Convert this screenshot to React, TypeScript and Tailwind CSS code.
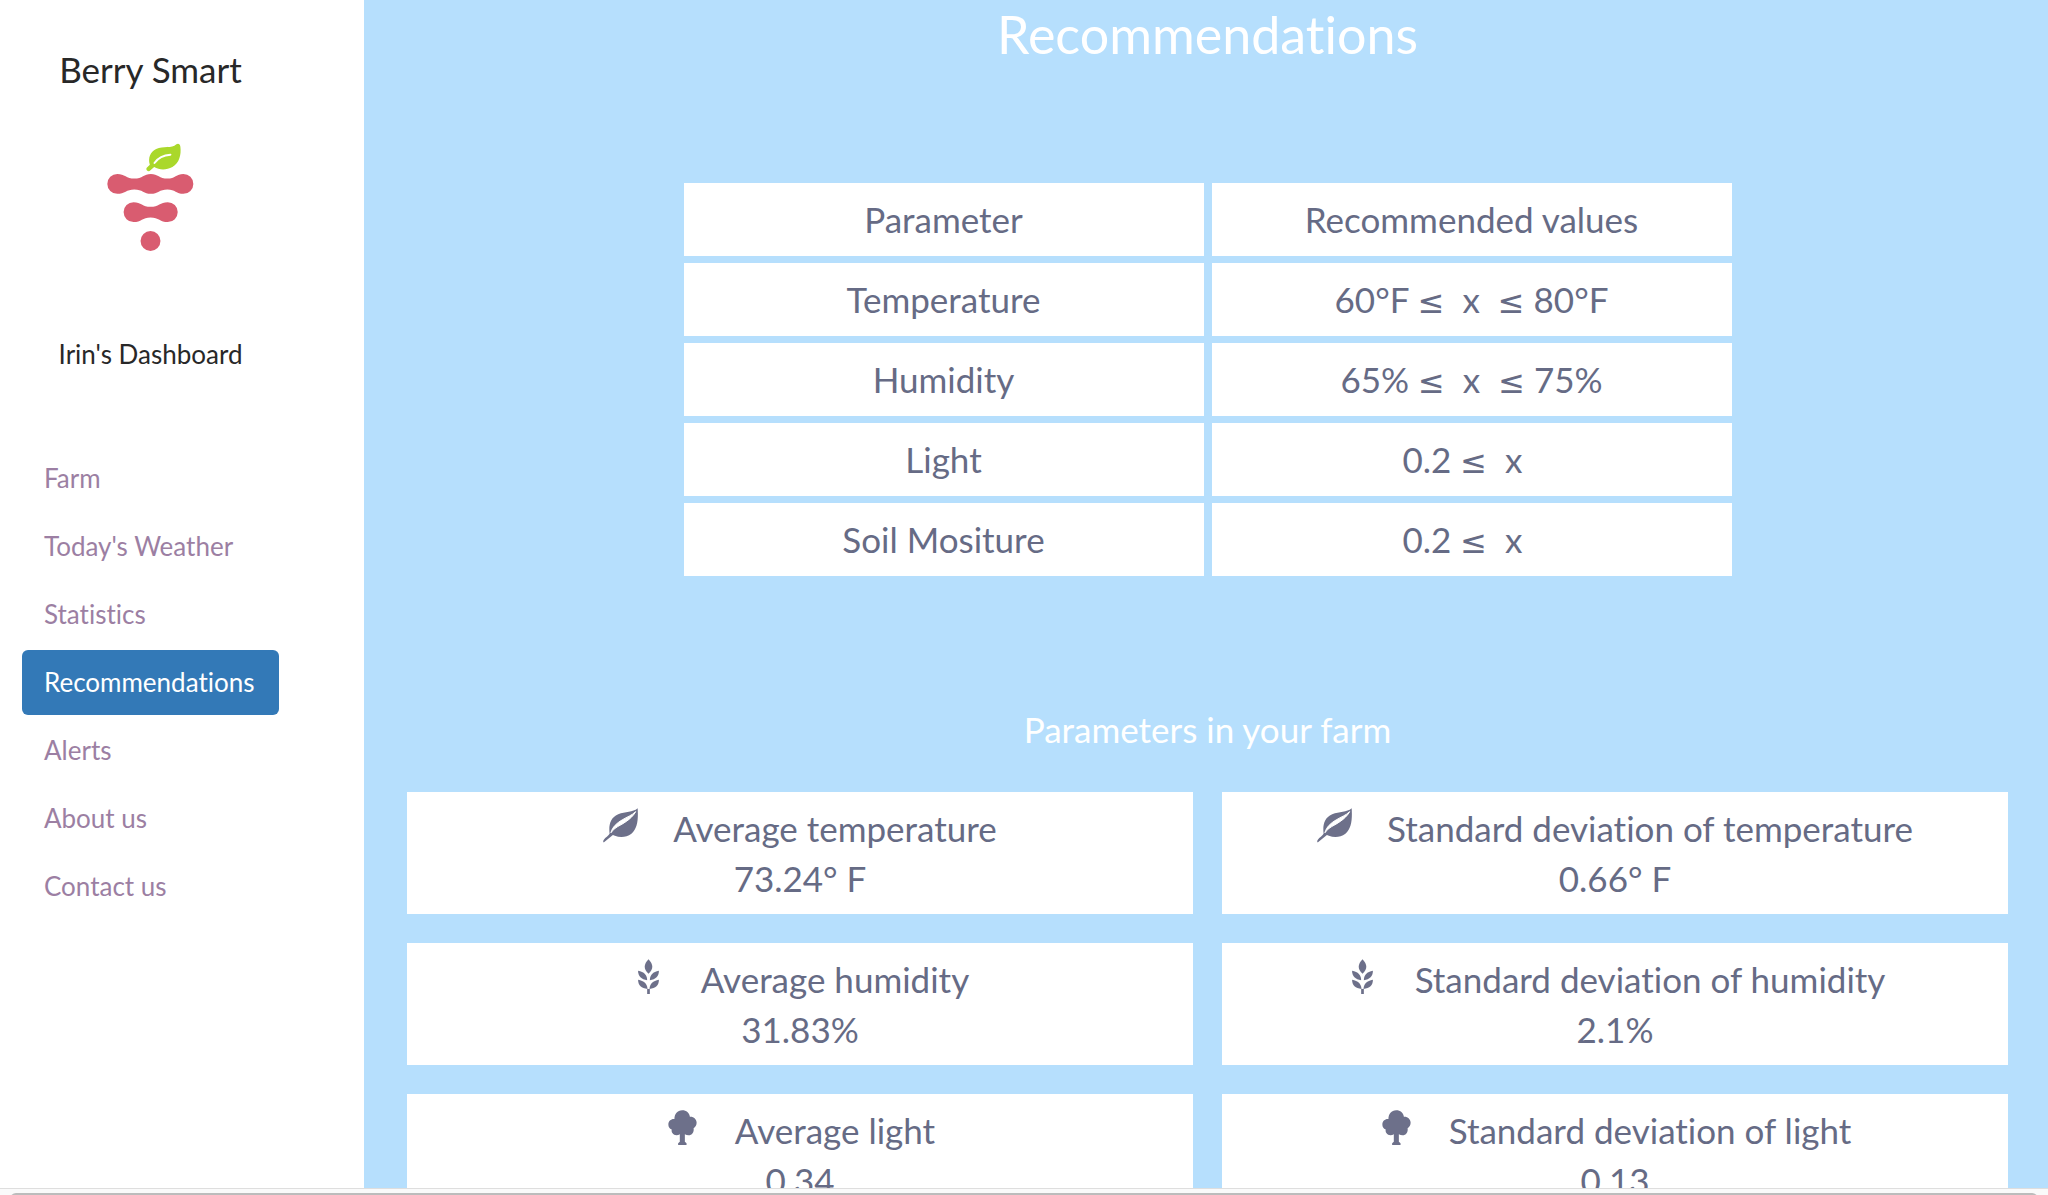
import type { ReactNode } from "react";

const navItems = [
  "Farm",
  "Today's Weather",
  "Statistics",
  "Recommendations",
  "Alerts",
  "About us",
  "Contact us",
];

function Lte() {
  return <span className="font-['DejaVu_Sans',sans-serif] text-[32px] leading-none">≤</span>;
}

const rows: { name: string; min: string; max?: string }[] = [
  { name: "Temperature", min: "60°F", max: "80°F" },
  { name: "Humidity", min: "65%", max: "75%" },
  { name: "Light", min: "0.2" },
  { name: "Soil Mositure", min: "0.2" },
];

function BerryLogo() {
  return (
    <svg viewBox="321 428 262 326" className="h-[109px] w-[87px]" role="img" aria-label="Berry Smart logo">
      <g fill="#d95c70">
        <path d="M352 520C374 520 380 534 403 534C428 534 432 520 453 520C474 520 479 534 503 534C526 534 530 520 551 520A30 30 0 0 1 551 580C530 580 526 567 503 567C479 567 474 580 453 580C432 580 428 567 403 567C380 567 374 580 352 580A30 30 0 0 1 352 520Z" />
        <path d="M401 605C424 605 428 619 452 619C477 619 481 605 504 605A30 30 0 0 1 504 665C481 665 477 651 452 651C428 651 424 665 401 665A30 30 0 0 1 401 605Z" />
        <circle cx="452" cy="722" r="30" />
      </g>
      <path
        d="M530 431C536 427 541 431 542 438C545 462 539 487 518 499C500 509 479 509 463 499L451 510C446 515 437 508 440 502L450 492C444 473 451 453 469 445C491 435 515 445 530 431Z"
        fill="#aad82b"
      />
      <path d="M464 487C475 471 489 463 512 462" fill="none" stroke="#fff" strokeWidth="6" strokeLinecap="round" />
    </svg>
  );
}

function LeafIcon() {
  return (
    <svg viewBox="38 55 106 104" className="size-[35px]" fill="currentColor" aria-hidden="true">
      <path d="M143 55C145 88 143 116 124 132C109 143 90 144 74 138L68 136L41 158C38 159 38 154 40 151C46 142 54 139 58 132C55 107 59 84 84 73C106 65 128 68 143 55Z" />
      <path d="M62 129C72 112 92 107 108 95C120 87 131 76 137 65C125 77 110 81 98 89C80 99 66 112 62 129Z" fill="#fff" stroke="#fff" strokeWidth="3" />
    </svg>
  );
}

function GrainIcon() {
  return (
    <svg viewBox="39 58 104 104" className="size-[35px]" fill="currentColor" aria-hidden="true">
      <path d="M91 59C106 75 106 88 91 102C76 88 76 75 91 59Z" />
      <path d="M60 93C78 96 87 106 87 121C70 119 60 109 60 93Z" />
      <path d="M122 93C104 96 95 106 95 121C112 119 122 109 122 93Z" />
      <path d="M60 120C78 123 87 132 88 147C70 146 60 136 60 120Z" />
      <path d="M122 120C104 123 95 132 94 147C112 146 122 136 122 120Z" />
      <path d="M87 147H95V162H87Z" />
    </svg>
  );
}

function TreeIcon() {
  return (
    <svg viewBox="47 47 104 104" className="size-[35px]" fill="currentColor" aria-hidden="true">
      <path d="M75 74C75 59 84 48 98 48C111 48 119 56 121 67C132 66 141 74 141 85C141 93 137 98 132 101C134 113 127 122 117 122C113 122 109 121 106 119V141L111 146V151H86V146L91 141V119C88 121 85 122 81 122C71 122 65 113 67 105C60 102 57 97 57 90C57 80 65 73 75 74Z" />
    </svg>
  );
}

const cards: { icon: () => ReactNode; label: string; value: string }[] = [
  { icon: LeafIcon, label: "Average temperature", value: "73.24° F" },
  { icon: LeafIcon, label: "Standard deviation of temperature", value: "0.66° F" },
  { icon: GrainIcon, label: "Average humidity", value: "31.83%" },
  { icon: GrainIcon, label: "Standard deviation of humidity", value: "2.1%" },
  { icon: TreeIcon, label: "Average light", value: "0.34" },
  { icon: TreeIcon, label: "Standard deviation of light", value: "0.13" },
];

export default function App() {
  return (
    <div className="flex h-screen flex-col overflow-hidden bg-white font-[Lato,sans-serif] [font-variant-ligatures:none]">
      <div className="flex min-h-0 flex-1 overflow-hidden">
        <aside className="w-[364px] shrink-0 pl-[22px] text-[#282828]">
          <div className="flex w-[257px] flex-col items-center">
            <h2 className="mt-11 text-[35px] leading-[50px]">Berry Smart</h2>
            <div className="mt-[49px]">
              <BerryLogo />
            </div>
            <h4 className="mt-[84px] text-[26px] leading-9">Irin's Dashboard</h4>
            <nav className="mt-[74px] flex w-full flex-col gap-[3px]">
              {navItems.map((item) => {
                const active = item === "Recommendations";
                return (
                  <a
                    key={item}
                    href="#"
                    aria-current={active ? "page" : undefined}
                    className={
                      active
                        ? "rounded-md bg-[#3379b7] px-[22px] py-3.5 text-[26px] leading-[37px] text-white"
                        : "px-[22px] py-3.5 text-[26px] leading-[37px] text-[#9c7fa3]"
                    }
                  >
                    {item}
                  </a>
                );
              })}
            </nav>
          </div>
        </aside>

        <main className="min-w-0 flex-1 overflow-hidden bg-[#b6dffd] pt-1 pr-10 pl-[43px] text-center text-[35px] leading-[50px] text-[#666b85]">
          <h1 className="text-[52px] leading-[60px] text-white">Recommendations</h1>

          <table className="mx-auto mt-28 w-full max-w-[1064px] table-fixed border-separate border-spacing-x-2 border-spacing-y-[7px]">
            <thead>
              <tr>
                <th scope="col" className="bg-white py-[11px] leading-[51px] font-normal">Parameter</th>
                <th scope="col" className="bg-white py-[11px] leading-[51px] font-normal">Recommended values</th>
              </tr>
            </thead>
            <tbody>
              {rows.map(({ name, min, max }) => (
                <tr key={name}>
                  <td className="bg-white py-[11px] leading-[51px]">{name}</td>
                  <td className="bg-white py-[11px] leading-[51px]">
                    {min} <Lte /> {"\u00a0x\u00a0"}
                    {max ? (
                      <>
                        {" "}
                        <Lte /> {max}
                      </>
                    ) : (
                      "\u00a0"
                    )}
                  </td>
                </tr>
              ))}
            </tbody>
          </table>

          <h3 className="mt-[121px] text-white">Parameters in your farm</h3>

          <div className="mt-[38px] grid grid-cols-2 gap-[29px]">
            {cards.map(({ icon: Icon, label, value }) => (
              <section key={label} className="bg-white py-[11px]">
                <div className="flex justify-center gap-[35px]">
                  <span className="pt-[5px] text-[#6d708a]">
                    <Icon />
                  </span>
                  <span>{label}</span>
                </div>
                <div>{value}</div>
              </section>
            ))}
          </div>
        </main>
      </div>
      <div className="h-[7px] shrink-0 overflow-hidden border-t border-[#dedede] bg-[#fafafa] px-2.5 pt-1">
        <div className="h-3 rounded-full bg-[#bcbcbc]" />
      </div>
    </div>
  );
}
